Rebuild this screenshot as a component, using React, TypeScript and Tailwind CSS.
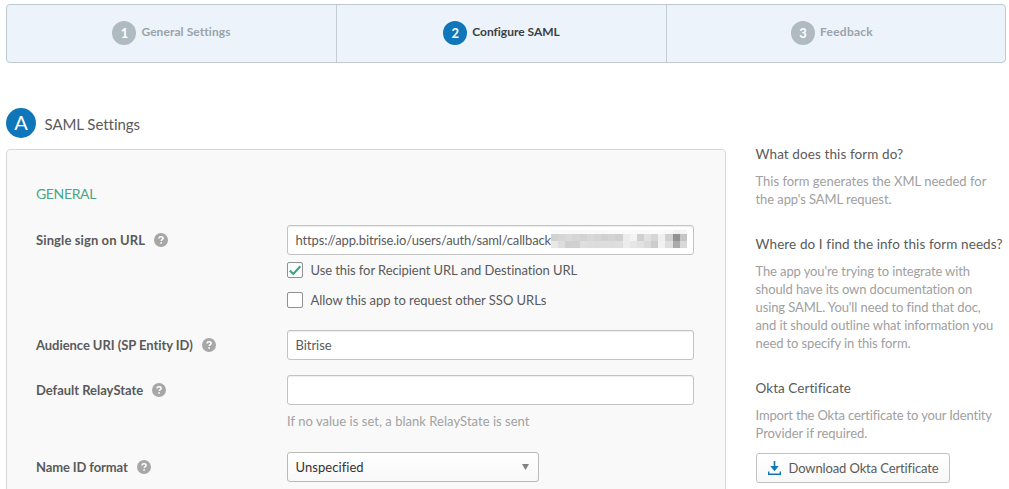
import React from 'react';

function Help() {
  return (
    <svg width="14" height="14" viewBox="0 0 14 14" className="shrink-0" aria-hidden="true">
      <circle cx="7" cy="7" r="7" fill="#a7a7a7" />
      <path d="M4.9 5.5C5 4.3 5.9 3.8 7 3.8c1.200 0 2.100.6 2.100 1.600C9.100 6.700 7.200 6.600 7.200 8.100" fill="none" stroke="#fff" strokeWidth="1.500" />
      <circle cx="7.100" cy="9.900" r="0.900" fill="#fff" />
    </svg>
  );
}

function Step({ n, label, active, spacing, last }: { n: number; label: string; active?: boolean; spacing: string; last?: boolean }) {
  return (
    <div className={last ? 'flex w-[330px] items-center justify-center pb-px' : 'flex w-[330px] items-center justify-center border-r border-[#c3ced4] pb-px'}>
      <span className={active ? 'flex size-6 items-center justify-center rounded-full bg-[#0f76ba] pb-px text-[13px] font-bold text-white' : 'flex size-6 items-center justify-center rounded-full bg-[#b0bac1] pb-px text-[13px] font-bold text-white'}>
        {n}
      </span>
      <span className={`${active ? 'text-[#3a3f44]' : 'text-[#9aa3a9]'} ml-[5px] pb-0.5 text-xs font-bold ${spacing}`}>{label}</span>
    </div>
  );
}

function Label({ text, spacing }: { text: string; spacing: string }) {
  return (
    <div className="flex h-[30px] w-[251px] shrink-0 items-center gap-[9px]">
      <span className={`pb-px font-bold ${spacing}`}>{text}</span>
      <Help />
    </div>
  );
}

const field = 'flex h-[30px] w-[407px] items-center rounded-[3px] border border-[#c3c3c3] bg-white px-[7.500px] shadow-[inset_0_1px_1px_#eeeeee]';

const mosaic: string[][] = [
  ['#f9f9f9', '#fafafa', '#f9f9f9', '#f9f9f9', '#f9f9f9', '#fafafa', '#f9f9f9', '#f9f9f9', '#fafafa', '#fafafa', '#fbfbfb', '#fafafa', '#f9f9f9', '#f9f9f9', '#fbfbfb', '#fafafa', '#f8f8f8', '#f0f0f0', '#f5f5f5', '#fafafa'],
  ['#d2d2d2', '#d6d6d6', '#dadada', '#d6d6d6', '#d3d3d3', '#d8d8d8', '#d5d5d5', '#d0d0d0', '#d4d4d4', '#d0d0d0', '#ececec', '#f3f3f3', '#d0d0d0', '#e1e1e1', '#d6d6d6', '#f0f0f0', '#d0d0d0', '#929292', '#c4c4c4', '#ffffff'],
  ['#e8e8e8', '#dddddd', '#cfcfcf', '#d0d0d0', '#dfdfdf', '#dddddd', '#dcdcdc', '#dddddd', '#dcdcdc', '#dedede', '#ededed', '#e6e6e6', '#e2e2e2', '#dadada', '#cccccc', '#f2f2f2', '#dedede', '#ababab', '#d8d8d8', '#ffffff'],
];

function Redacted() {
  return (
    <svg width="136" height="18" viewBox="0 0 136 18" shapeRendering="crispEdges" className="mb-0.5 shrink-0" aria-hidden="true">
      {mosaic.map((row, r) =>
        row.slice(0, 19).map((c, i) => <rect key={`${r}-${i}`} x={i * 7.15} y={[0, 4, 11][r]} width="7.2" height={[4, 7, 7][r]} fill={c} />),
      )}
    </svg>
  );
}

function Check({ label, checked, spacing }: { label: string; checked?: boolean; spacing: string }) {
  return (
    <div className="flex h-4 items-center">
      <span className="flex size-4 items-center justify-center rounded-[2px] border border-[#919191] bg-white">
        {checked && (
          <svg width="14" height="14" viewBox="0 0 14 14" aria-hidden="true">
            <path d="M1.800 7.600 5.300 11 12.300 3.200" fill="none" stroke="#3aa583" strokeWidth="2.100" />
          </svg>
        )}
      </span>
      <span className={`ml-[7.500px] whitespace-nowrap pb-px ${spacing}`}>{label}</span>
    </div>
  );
}

const heading = 'h-[18px] text-[13.500px] text-[#5a5a5a]';

export default function App() {
  return (
    <div className="h-[489px] w-[1009px] overflow-hidden bg-white pl-1.5 pt-1 font-['Lato','Liberation_Sans',sans-serif] text-[13px] leading-[18px] text-[#5a5a5a] [font-variant-ligatures:none]">
      <div className="flex h-[59px] w-[1000px] rounded-[4px] border border-[#bfcad0] bg-[#ecf3fa]">
        <Step n={1} label="General Settings" spacing="tracking-[0.08px]" />
        <Step n={2} label="Configure SAML" spacing="tracking-[-0.02px]" active />
        <Step n={3} label="Feedback" spacing="tracking-[0.25px]" last />
      </div>

      <div className="mt-[45px] flex h-[30px] items-center">
        <span className="flex size-[30px] items-center justify-center rounded-full bg-[#0f76ba] pb-0.5 text-xl text-white">A</span>
        <span className="ml-[8.500px] pt-px text-[15px] tracking-[-0.05px]">SAML Settings</span>
      </div>

      <div className="flex">
        <main className="mt-[11px] h-[400px] w-[720px] shrink-0 rounded-[4px] border border-[#d8d8d8] bg-[#f9f9f9] pl-[29px] pt-[34px]">
          <h2 className="h-[18px] text-sm tracking-[-0.36px] text-[#46a888]">GENERAL</h2>

          <div className="mt-[23px] flex">
            <Label text="Single sign on URL" spacing="tracking-[0.11px]" />
            <div className="flex flex-col">
              <div className={field}>
                <span className="w-[255px] shrink-0 whitespace-nowrap pb-px tracking-[-0.15px]">https://app.bitrise.io/users/auth/saml/callback</span>
                <Redacted />
              </div>
              <div className="mt-[7px] flex flex-col gap-3.5">
                <Check label="Use this for Recipient URL and Destination URL" spacing="tracking-[-0.08px]" checked />
                <Check label="Allow this app to request other SSO URLs" spacing="tracking-[-0.03px]" />
              </div>
            </div>
          </div>

          <div className="mt-[22px] flex">
            <Label text="Audience URI (SP Entity ID)" spacing="tracking-[-0.06px]" />
            <div className={field}>
              <span className="pb-px tracking-[-0.05px]">Bitrise</span>
            </div>
          </div>

          <div className="mt-[15px] flex">
            <Label text="Default RelayState" spacing="tracking-[-0.03px]" />
            <div>
              <div className={field} />
              <p className="mt-[7px] h-[18px] tracking-[0.03px] text-[#a2a2a2]">If no value is set, a blank RelayState is sent</p>
            </div>
          </div>

          <div className="mt-[22px] flex">
            <Label text="Name ID format" spacing="tracking-[-0.12px]" />
            <div className="flex h-[30px] w-[252px] items-center justify-between rounded-[3px] border border-[#b9b9b9] bg-linear-to-b from-white to-[#f8f8f8] pl-[7.500px] pr-[9px] text-[#333333]">
              <span className="pb-px tracking-[0.06px]">Unspecified</span>
              <svg width="7" height="6" viewBox="0 0 7 6" aria-hidden="true">
                <path d="M0 0h7L3.500 6z" fill="#828282" />
              </svg>
            </div>
          </div>
        </main>

        <aside className="ml-[29.500px] mt-[7px] w-[253px] whitespace-nowrap text-[#a0a0a0]">
          <h3 className={`${heading} tracking-[0.1px]`}>What does this form do?</h3>
          <p className="mt-[9px]">
            This form generates the XML needed for
            <br />
            <span className="tracking-[-0.08px]">the app's SAML request.</span>
          </p>

          <h3 className={`${heading} mt-[27px] tracking-[0.1px]`}>Where do I find the info this form needs?</h3>
          <p className="mt-[9px] tracking-[-0.11px]">
            The app you're trying to integrate with
            <br />
            should have its own documentation on
            <br />
            using SAML. You'll need to find that doc,
            <br />
            <span className="tracking-[-0.09px]">and it should outline what information you</span>
            <br />
            need to specify in this form.
          </p>

          <h3 className={`${heading} mt-[27px] tracking-[0.06px]`}>Okta Certificate</h3>
          <p className="mt-[9px] tracking-[-0.16px]">
            Import the Okta certificate to your Identity
            <br />
            <span className="tracking-[-0.03px]">Provider if required.</span>
          </p>

          <button className="mt-[11px] flex h-[30px] w-[194px] items-center rounded-[3px] border border-[#c1c1c1] bg-linear-to-b from-white to-[#f8f8f8] pl-[11px] text-[#5a5a5a]">
            <svg width="13" height="14" viewBox="0 0 13 14" aria-hidden="true">
              <path d="M5.700 0h1.600v5h3.400L6.500 10.200 2.300 5h3.400z" fill="#0f76ba" />
              <path d="M.7 10.500v2.700h11.600v-2.700" fill="none" stroke="#0f76ba" strokeWidth="1.400" />
            </svg>
            <span className="ml-2 pb-px tracking-[-0.12px]">Download Okta Certificate</span>
          </button>
        </aside>
      </div>
    </div>
  );
}
